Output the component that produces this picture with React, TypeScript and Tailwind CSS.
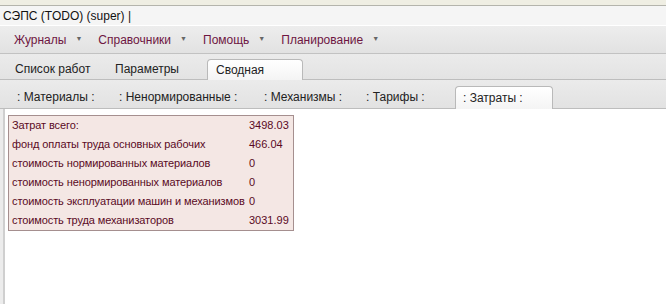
import { type ReactNode } from "react";

const menus = ["Журналы", "Справочники", "Помощь", "Планирование"];

const rows: [string, string][] = [
  ["Затрат всего:", "3498.03"],
  ["фонд оплаты труда основных рабочих", "466.04"],
  ["стоимость нормированных материалов", "0"],
  ["стоимость ненормированных материалов", "0"],
  ["стоимость эксплуатации машин и механизмов", "0"],
  ["стоимость труда механизаторов", "3031.99"],
];

function Tab({ active, children, className }: { active?: boolean; children: ReactNode; className?: string }) {
  if (active) {
    return (
      <div
        className={`h-full shrink-0 flex items-center rounded-t-[4px] border border-b-0 border-[#b9b9b9] bg-gradient-to-b from-[#ffffff] to-[#f4f4f4] -mb-px relative ${className ?? ""}`}
      >
        {children}
      </div>
    );
  }
  return <div className={`h-full shrink-0 flex items-center ${className ?? ""}`}>{children}</div>;
}

export default function App() {
  return (
    <div className="w-[666px] h-[304px] overflow-hidden bg-white text-[#222] font-['Liberation_Sans',Arial,sans-serif] flex flex-col">
      {/* window chrome strip */}
      <div className="h-[6px] shrink-0 bg-[#efeee3] border-b border-[#b4b4ac]" />

      {/* title */}
      <div className="h-[20px] shrink-0 bg-[#f5f5f5] border-b border-white flex items-center px-[3px] text-[12px] text-[#111]">
        СЭПС (TODO) (super) |
      </div>

      {/* menu */}
      <div className="h-[28px] shrink-0 bg-gradient-to-b from-[#ededed] to-[#e2e2e2] border-b border-[#c2c2c2] flex items-center pl-[14px] text-[12px] text-[#6e1642]">
        {menus.map((m) => (
          <div key={m} className="flex items-center gap-[9px] mr-[16px]">
            <span>{m}</span>
            <span className="text-[7px] text-[#666]">▼</span>
          </div>
        ))}
      </div>

      {/* main tabs */}
      <div className="h-[26px] shrink-0 bg-gradient-to-b from-[#ebebeb] to-[#e3e3e3] border-b border-[#bdbdbd] flex items-end pt-[4px] text-[12px]">
        <Tab className="pl-[15px] w-[115px]">Список работ</Tab>
        <Tab className="w-[92px]">Параметры</Tab>
        <Tab active className="pl-[8px] w-[96px]">Сводная</Tab>
      </div>

      {/* sub tabs */}
      <div className="h-[29px] shrink-0 bg-gradient-to-b from-[#ebebeb] to-[#e2e2e2] border-b border-[#bdbdbd] flex items-end pt-[5px] pl-[4px] text-[12px]">
        <Tab className="pl-[13px] w-[102px]">: Материалы :</Tab>
        <Tab className="pl-[13px] w-[145px]">: Ненормированные :</Tab>
        <Tab className="pl-[13px] w-[102px]">: Механизмы :</Tab>
        <Tab className="pl-[13px] w-[102px]">: Тарифы :</Tab>
        <Tab active className="pl-[7px] w-[98px]">: Затраты :</Tab>
      </div>

      {/* content */}
      <div className="flex-1 flex min-h-0">
        <div className="w-[3px] bg-[#ececec] shrink-0" />
        <div className="w-[2px] bg-[#cfcfcf] shrink-0" />
        <div className="flex-1 pl-[3px] pt-[6px]">
          <div className="w-[286px] border border-[#a58f8f] bg-[#f4e7e4] text-[11px] text-[#5a0a24]">
            {rows.map(([label, value]) => (
              <div key={label} className="h-[19px] flex items-center">
                <span className="w-[240px] pl-[3px] whitespace-nowrap tracking-[-0.1px]">{label}</span>
                <span>{value}</span>
              </div>
            ))}
          </div>
        </div>
      </div>
    </div>
  );
}
